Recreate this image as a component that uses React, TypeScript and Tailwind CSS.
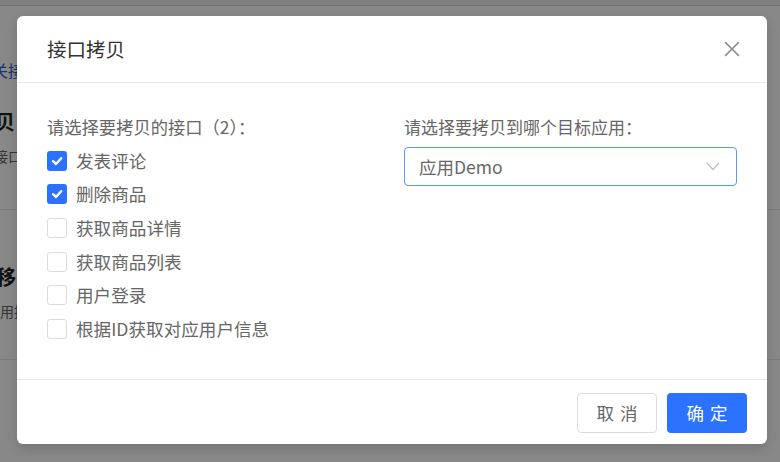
import React from "react";

const font = { fontFamily: '"Noto Sans CJK SC", "Noto Sans", sans-serif' };

function Check({ checked }: { checked: boolean }) {
  if (checked) {
    return (
      <span className="flex h-[20px] w-[20px] shrink-0 items-center justify-center rounded-[3px] bg-[#2a72ff]">
        <svg width="14" height="14" viewBox="0 0 14 14" fill="none">
          <path d="M3 7.2 L6 10 L11.2 4.2" stroke="#fff" strokeWidth="2.4" strokeLinecap="round" strokeLinejoin="round" />
        </svg>
      </span>
    );
  }
  return <span className="block h-[20px] w-[20px] shrink-0 rounded-[3px] border border-[#dcdcdc] bg-white" />;
}

const items: [string, boolean][] = [
  ["发表评论", true],
  ["删除商品", true],
  ["获取商品详情", false],
  ["获取商品列表", false],
  ["用户登录", false],
  ["根据ID获取对应用户信息", false],
];

export default function App() {
  return (
    <div className="relative h-[462px] w-[780px] overflow-hidden bg-white" style={font}>
      {/* underlying page */}
      <div className="flex h-full flex-col">
        <div className="h-[6px] border-b border-[#d8d8d8] bg-[#eeeeee]" />
        <div className="mt-[52px] ml-[-8px] whitespace-nowrap text-[16px] leading-[24px] text-[#2a5bd7]">关接口</div>
        <div className="mt-[26px] ml-[-5px] whitespace-nowrap text-[20px] font-bold leading-[28px] text-[#222]">贝</div>
        <div className="mt-[10px] ml-[-6px] whitespace-nowrap text-[14px] leading-[20px] text-[#666]">接口</div>
        <div className="mt-[43px] h-px bg-[#e6e6e6]" />
        <div className="mt-[53px] ml-[-4px] whitespace-nowrap text-[20px] font-bold leading-[28px] text-[#222]">移</div>
        <div className="mt-[10px] whitespace-nowrap text-[14px] leading-[20px] text-[#666]">用接口</div>
        <div className="mt-[38px] h-px bg-[#e6e6e6]" />
      </div>

      {/* overlay */}
      <div className="absolute inset-0 bg-black/[0.465]" />

      {/* modal */}
      <div className="absolute left-[17px] top-[16px] flex h-[428px] w-[750px] flex-col rounded-[6px] bg-white shadow-[0_4px_12px_rgba(0,0,0,0.15)]">
        <div className="flex h-[67px] items-center justify-between border-b border-[#e8e8e8] pl-[30px] pr-[27px]">
          <span className="text-[19.5px] leading-[26px] text-[#333]">接口拷贝</span>
          <svg width="16" height="16" viewBox="0 0 16 16" fill="none">
            <path d="M1.5 1.5 L14.5 14.5 M14.5 1.5 L1.5 14.5" stroke="#8a8a8a" strokeWidth="1.6" strokeLinecap="round" />
          </svg>
        </div>

        <div className="flex flex-1 px-[30px] pt-[32px]">
          <div className="flex-1">
            <div className="text-[17.3px] leading-[24px] text-[#666]">请选择要拷贝的接口（2）：</div>
            <div className="mt-[5px] flex flex-col">
              {items.map(([label, checked]) => (
                <div key={label} className="flex h-[33.6px] items-center gap-[9px]">
                  <Check checked={checked} />
                  <span className="text-[17.6px] leading-[24px] text-[#666]">{label}</span>
                </div>
              ))}
            </div>
          </div>
          <div className="w-[333px]">
            <div className="text-[17px] leading-[24px] text-[#666]">请选择要拷贝到哪个目标应用：</div>
            <div className="mt-[8px] flex h-[39px] items-center justify-between rounded-[4px] border border-[#5b95ff] pl-[14px] pr-[16px]">
              <span className="text-[17.5px] leading-[24px] text-[#666]">应用Demo</span>
              <svg width="14" height="9" viewBox="0 0 14 9" fill="none">
                <path d="M1 1 L7 7.5 L13 1" stroke="#bdbdbd" strokeWidth="1.2" />
              </svg>
            </div>
          </div>
        </div>

        <div className="flex h-[65px] items-start justify-end gap-[10px] border-t border-[#e8e8e8] pr-[20px] pt-[13px]">
          <button className="flex h-[40px] w-[80px] items-center justify-center rounded-[4px] border border-[#dcdcdc] bg-white pl-[6px] text-[17.5px] tracking-[0.35em] text-[#666]">
            取消
          </button>
          <button className="flex h-[40px] w-[80px] items-center justify-center rounded-[4px] bg-[#2a72ff] pl-[6px] text-[17.5px] tracking-[0.35em] text-white">
            确定
          </button>
        </div>
      </div>
    </div>
  );
}
